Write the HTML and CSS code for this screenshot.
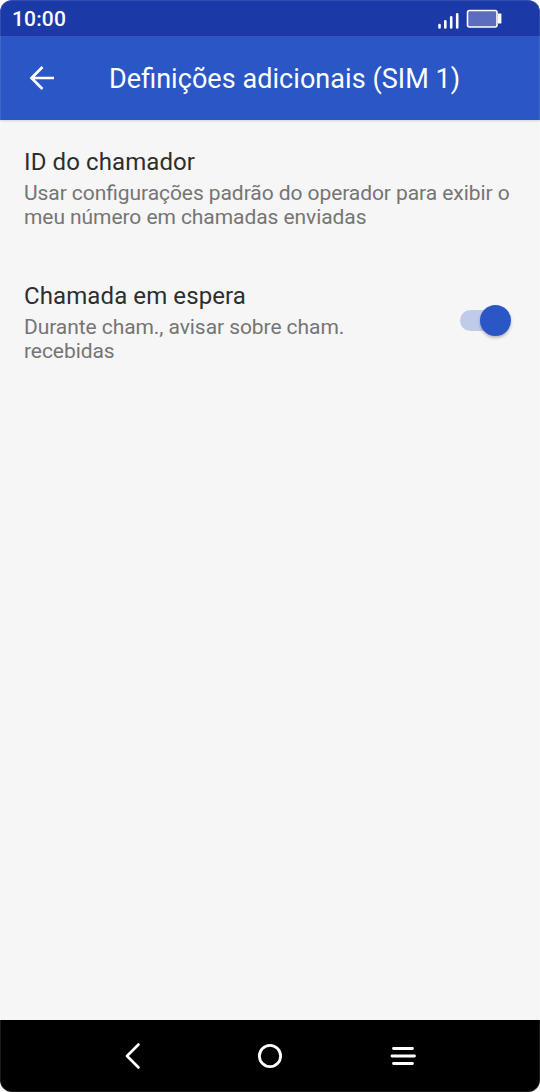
FILE: index.html
```html
<!DOCTYPE html>
<html lang="pt">
<head>
  <meta charset="UTF-8">
  <title>Definições adicionais (SIM 1)</title>
  <link rel="stylesheet" href="styles.css">
</head>
<body>
  <div class="phone">
    <div class="status-bar">
      <span class="time">10:00</span>
      <svg class="status-icons" width="66" height="22" viewBox="0 0 66 22">
        <g stroke="#fff" stroke-width="2.6" stroke-linecap="round">
          <path d="M1.5 17v2.5M7.3 13.2v6.3M13.2 9.2v10.3M19.2 6.2v13.3"/>
        </g>
        <rect x="29.5" y="2.5" width="29.5" height="16.5" rx="2" fill="#5c6dc0" stroke="#fff" stroke-width="1.6"/>
        <path d="M60 5.5h3.4v10H60z" fill="#fff"/>
      </svg>
    </div>

    <header class="app-bar">
      <svg class="back" width="26" height="26" viewBox="0 0 26 26">
        <path d="M25 13H3M13.5 2L2.5 13l11 11" fill="none" stroke="#fff" stroke-width="2.7"/>
      </svg>
      <h1>Definições adicionais (SIM 1)</h1>
    </header>

    <main class="settings">
      <div class="item">
        <div class="text">
          <h2>ID do chamador</h2>
          <p>Usar configurações padrão do operador para exibir o meu número em chamadas enviadas</p>
        </div>
      </div>
      <div class="item">
        <div class="text">
          <h2>Chamada em espera</h2>
          <p>Durante cham., avisar sobre cham. recebidas</p>
        </div>
        <div class="switch"><span class="thumb"></span></div>
      </div>
    </main>

    <nav class="nav-bar">
      <svg width="28" height="28" viewBox="0 0 28 28">
        <path d="M16.5 2.5L5 14l11.5 11.5" fill="none" stroke="#fff" stroke-width="2.7" stroke-linecap="round" stroke-linejoin="round"/>
      </svg>
      <svg width="28" height="28" viewBox="0 0 28 28">
        <circle cx="14" cy="14" r="10.6" fill="none" stroke="#fff" stroke-width="2.8"/>
      </svg>
      <svg width="28" height="28" viewBox="0 0 28 28">
        <path d="M3.5 6.5h19M2 14h22.5M3.5 21.5h19" fill="none" stroke="#fff" stroke-width="2.8" stroke-linecap="round"/>
      </svg>
    </nav>
  </div>
</body>
</html>
```
FILE: styles.css
```css
* { box-sizing: border-box; }
body { margin: 0; background: #fff; font-family: Roboto, sans-serif; font-feature-settings: "liga" 1; }
h1, h2, p { margin: 0; font-weight: 400; }
svg { display: block; }

.phone { position: relative; display: flex; flex-direction: column; width: 540px; height: 1092px; border-radius: 12px; overflow: hidden; background: #f6f6f6; }
/* hairline around the screen */
.phone::after { content: ""; position: absolute; inset: 0; border: 1px solid rgba(255, 255, 255, 0.1); border-radius: 12px; }

.status-bar { display: flex; justify-content: space-between; height: 36px; padding: 0 36px 0 12px; background: #1c39a8; color: #fff; }
.time { font-size: 21px; font-weight: 500; line-height: 38px; letter-spacing: 0.15px; }
.status-icons { margin-top: 8px; }

.app-bar { display: flex; align-items: center; height: 84px; padding-left: 29px; background: #2a56c6; color: #fff; box-shadow: 0 1px 2px rgba(0, 0, 0, 0.15); }
.app-bar h1 { margin: 2px 0 0 54px; font-size: 27px; line-height: 36px; letter-spacing: 0.05px; }

.settings { flex: 1; padding-top: 25px; }
.item { display: flex; align-items: center; justify-content: space-between; height: 84px; margin-bottom: 50px; padding: 0 28px 0 24px; }
.item h2 { color: #2e2e2e; font-size: 24px; line-height: 32px; letter-spacing: 0.1px; margin-bottom: 3px; white-space: nowrap; }
.item p { color: #757575; font-size: 21px; line-height: 24px; letter-spacing: -0.07px; }

.switch { position: relative; flex: none; width: 51px; height: 31px; margin: 0 1px 2px 64px; }
.switch::before { content: ""; position: absolute; left: 0; top: 5px; width: 40px; height: 21px; border-radius: 11px; background: #bfcbe8; }
.thumb { position: absolute; right: 0; top: 0; width: 31px; height: 31px; border-radius: 50%; background: #2a56c6; box-shadow: 0 2px 3px rgba(0, 0, 0, 0.25); }

.nav-bar { display: flex; align-items: center; justify-content: center; gap: 106px; height: 72px; background: #000; }
```
